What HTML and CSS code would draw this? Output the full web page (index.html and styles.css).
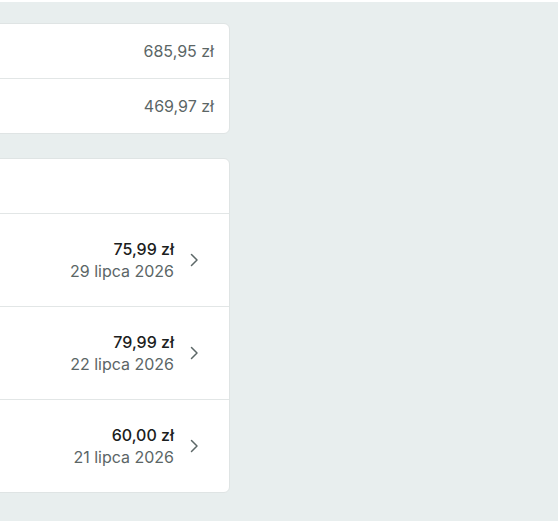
FILE: index.html
```html
<!DOCTYPE html>
<html lang="pl">
<head>
<meta charset="utf-8">
<link rel="stylesheet" href="styles.css">
</head>
<body>
<div class="page">
  <div class="column">
    <section class="card">
      <div class="sum-row"><span class="sum">685,95 zł</span></div>
      <div class="sum-row"><span class="sum">469,97 zł</span></div>
    </section>
    <section class="card">
      <div class="card-head"></div>
      <a class="order-row">
        <div class="order-info">
          <span class="amount">75,99 zł</span>
          <span class="date">29 lipca 2026</span>
        </div>
        <svg class="chev" width="20" height="20" viewBox="0 0 20 20"><path d="M7.5 4.5 L13 10 L7.5 15.5" fill="none" stroke="#5d6868" stroke-width="1.5" stroke-linecap="round" stroke-linejoin="round"/></svg>
      </a>
      <a class="order-row">
        <div class="order-info">
          <span class="amount">79,99 zł</span>
          <span class="date">22 lipca 2026</span>
        </div>
        <svg class="chev" width="20" height="20" viewBox="0 0 20 20"><path d="M7.5 4.5 L13 10 L7.5 15.5" fill="none" stroke="#5d6868" stroke-width="1.5" stroke-linecap="round" stroke-linejoin="round"/></svg>
      </a>
      <a class="order-row">
        <div class="order-info">
          <span class="amount">60,00 zł</span>
          <span class="date">21 lipca 2026</span>
        </div>
        <svg class="chev" width="20" height="20" viewBox="0 0 20 20"><path d="M7.5 4.5 L13 10 L7.5 15.5" fill="none" stroke="#5d6868" stroke-width="1.5" stroke-linecap="round" stroke-linejoin="round"/></svg>
      </a>
    </section>
  </div>
</div>
</body>
</html>
```
FILE: styles.css
```css
html, body {
  margin: 0;
  padding: 0;
  background: #ffffff;
  font-family: Inter, "Noto Sans", sans-serif;
}
.page {
  margin: 2px 1px 0 0;
  background: #e8eeee;
  height: 519px;
  overflow: hidden;
  padding-top: 21px;
  box-sizing: border-box;
}
.column {
  width: 430px;
  margin-left: -200px;
  display: flex;
  flex-direction: column;
  gap: 24px;
}
.card {
  background: #ffffff;
  border: 1px solid #dfe4e4;
  border-radius: 6px;
  overflow: hidden;
}
.sum-row {
  height: 54px;
  display: flex;
  align-items: center;
  justify-content: flex-end;
  padding-right: 15px;
  border-top: 1px solid #e2e6e6;
}
.sum-row:first-child { border-top: none; }
.sum {
  font-size: 16px;
  color: #5b6666;
}
.card-head {
  height: 54px;
}
.order-row {
  display: flex;
  align-items: center;
  justify-content: flex-end;
  gap: 10px;
  height: 92px;
  padding-right: 25px;
  border-top: 1px solid #e2e6e6;
}
.order-info {
  display: flex;
  flex-direction: column;
  align-items: flex-end;
  line-height: 22px;
  font-size: 16px;
}
.amount {
  font-weight: 500;
  color: #1b2020;
}
.date {
  color: #5b6666;
}
.chev { display: block; }
```
